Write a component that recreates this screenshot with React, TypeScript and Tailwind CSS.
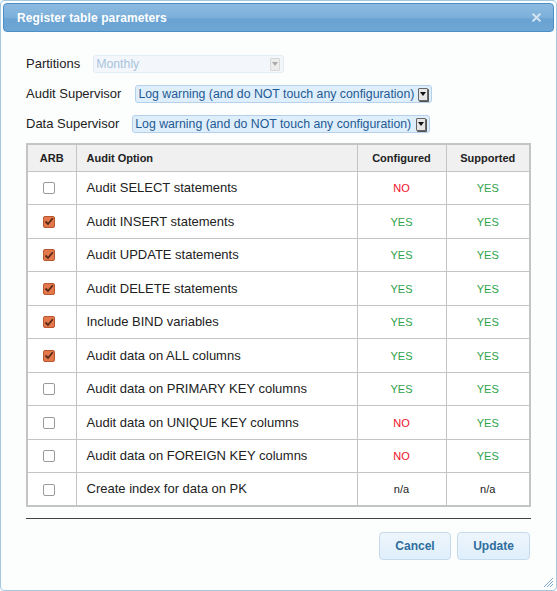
import React from 'react'

const rows = [
  { arb: false, label: 'Audit SELECT statements', conf: 'NO', sup: 'YES' },
  { arb: true, label: 'Audit INSERT statements', conf: 'YES', sup: 'YES' },
  { arb: true, label: 'Audit UPDATE statements', conf: 'YES', sup: 'YES' },
  { arb: true, label: 'Audit DELETE statements', conf: 'YES', sup: 'YES' },
  { arb: true, label: 'Include BIND variables', conf: 'YES', sup: 'YES' },
  { arb: true, label: 'Audit data on ALL columns', conf: 'YES', sup: 'YES' },
  { arb: false, label: 'Audit data on PRIMARY KEY columns', conf: 'YES', sup: 'YES' },
  { arb: false, label: 'Audit data on UNIQUE KEY columns', conf: 'NO', sup: 'YES' },
  { arb: false, label: 'Audit data on FOREIGN KEY columns', conf: 'NO', sup: 'YES' },
  { arb: false, label: 'Create index for data on PK', conf: 'n/a', sup: 'n/a' },
]

function Flag({ v }: { v: string }) {
  if (v === 'n/a') return <span className="text-[11px] text-[#222]">n/a</span>
  return <span className={`text-[11px] ${v === 'NO' ? 'text-[#f0102a]' : 'text-[#2ea34a]'}`}>{v}</span>
}

function Check({ on }: { on: boolean }) {
  if (!on)
    return <span className="inline-block w-[12px] h-[12px] rounded-[2px] border border-[#9a9a9a] bg-white" />
  return (
    <span className="inline-flex items-center justify-center w-[12px] h-[12px] rounded-[2px] border border-[#b8562e] bg-[#e2784c]">
      <svg width="10" height="9" viewBox="0 0 10 9">
        <path d="M1.5 4.5 L4 7 L8.8 1.2" fill="none" stroke="#5a2a18" strokeWidth="1.8" />
      </svg>
    </span>
  )
}

function Select({ text, width, disabled }: { text: string; width: number; disabled?: boolean }) {
  return (
    <div
      className={`flex items-center h-[18px] rounded-[3px] border pl-[2px] pr-[3px] ${
        disabled ? 'border-[#e3ecf5] bg-[#f3f7fb] text-[#a9c3dd]' : 'border-[#b5d0ea] bg-[#dfeefb] text-[#1e5a94]'
      }`}
      style={{ width }}
    >
      <span className="flex-1 text-[12.3px] leading-none whitespace-nowrap">{text}</span>
      <span
        className={`flex items-center justify-center w-[10px] h-[13px] border rounded-[1px] ${
          disabled ? 'border-[#d8d8d8] bg-[#ececec]' : 'border-[#666] bg-[#e6e6e6] shadow-[1px_1px_0_#555]'
        }`}
      >
        <span className={`w-0 h-0 border-l-[3px] border-r-[3px] border-t-[4px] border-l-transparent border-r-transparent ${disabled ? 'border-t-[#aaa]' : 'border-t-[#111]'}`} />
      </span>
    </div>
  )
}

export default function App() {
  return (
    <div className="w-[557px] h-[591px] bg-white" style={{ fontFamily: '"Liberation Sans", Arial, sans-serif' }}>
      <div className="relative w-[557px] h-[591px] border border-[#a6c9e2] rounded-[4px] bg-[#fcfdfd] p-[2px] flex flex-col">
        <div className="h-[29px] flex items-center justify-between rounded-[4px] border border-[#4b90c9] bg-[linear-gradient(#8dbbe0,#7bafda_50%,#6aa3d2_55%,#6ea6d4)] pl-[13px] pr-[12px]">
          <span className="text-white font-bold text-[12px] tracking-[0.1px]">Register table parameters</span>
          <svg width="9" height="9" viewBox="0 0 9 9">
            <path d="M1.2 1.2 L7.8 7.8 M7.8 1.2 L1.2 7.8" stroke="#d5e4f1" strokeWidth="2" strokeLinecap="round" />
          </svg>
        </div>

        <div className="flex flex-col pl-[23px] pr-[24px] pt-[23px]">
          <div className="flex items-center gap-[13px] h-[18px] text-[13px] text-[#222]">
            <span>Partitions</span>
            <Select text="Monthly" width={191} disabled />
          </div>
          <div className="flex items-center gap-[14px] h-[18px] mt-[12px] text-[13px] text-[#222]">
            <span>Audit Supervisor</span>
            <Select text="Log warning (and do NOT touch any configuration)" width={297} />
          </div>
          <div className="flex items-center gap-[13px] h-[18px] mt-[12px] text-[13px] text-[#222]">
            <span>Data Supervisor</span>
            <Select text="Log warning (and do NOT touch any configuration)" width={298} />
          </div>

          <table className="mt-[10px] w-[505px] border-collapse border-2 border-[#c4c4c4] text-[13px] text-[#222]">
            <thead>
              <tr className="h-[27px] bg-[#f0f0f0] text-[11px] font-bold">
                <th className="w-[49px] border border-[#c4c4c4] font-bold">ARB</th>
                <th className="w-[281px] border border-[#c4c4c4] text-left pl-[10px] font-bold">Audit Option</th>
                <th className="w-[89px] border border-[#c4c4c4] font-bold">Configured</th>
                <th className="border border-[#c4c4c4] font-bold">Supported</th>
              </tr>
            </thead>
            <tbody>
              {rows.map((r) => (
                <tr key={r.label} className="h-[33.5px] bg-white">
                  <td className="border border-[#c4c4c4] pl-[15px]">
                    <span className="flex pt-[1px]">
                      <Check on={r.arb} />
                    </span>
                  </td>
                  <td className="border border-[#c4c4c4] pl-[10px]">{r.label}</td>
                  <td className="border border-[#c4c4c4] text-center">
                    <Flag v={r.conf} />
                  </td>
                  <td className="border border-[#c4c4c4] text-center">
                    <Flag v={r.sup} />
                  </td>
                </tr>
              ))}
            </tbody>
          </table>

          <div className="mt-[11px] h-[1px] w-[505px] bg-[#444]" />

          <div className="flex justify-end gap-[6px] mt-[13px] w-[505px] pr-[1px]">
            <button className="w-[72px] h-[28px] rounded-[4px] border border-[#c5dbec] bg-[linear-gradient(#eef5fc,#dfeffc)] text-[#2e6e9e] font-bold text-[12px]">
              Cancel
            </button>
            <button className="w-[73px] h-[28px] rounded-[4px] border border-[#c5dbec] bg-[linear-gradient(#eef5fc,#dfeffc)] text-[#2e6e9e] font-bold text-[12px]">
              Update
            </button>
          </div>
        </div>

        <svg className="absolute right-[2px] bottom-[2px]" width="12" height="12" viewBox="0 0 12 12">
          <path d="M11 2 L2 11 M11 5 L5 11 M11 8 L8 11" stroke="#7fa9cc" strokeWidth="1" />
        </svg>
      </div>
    </div>
  )
}
